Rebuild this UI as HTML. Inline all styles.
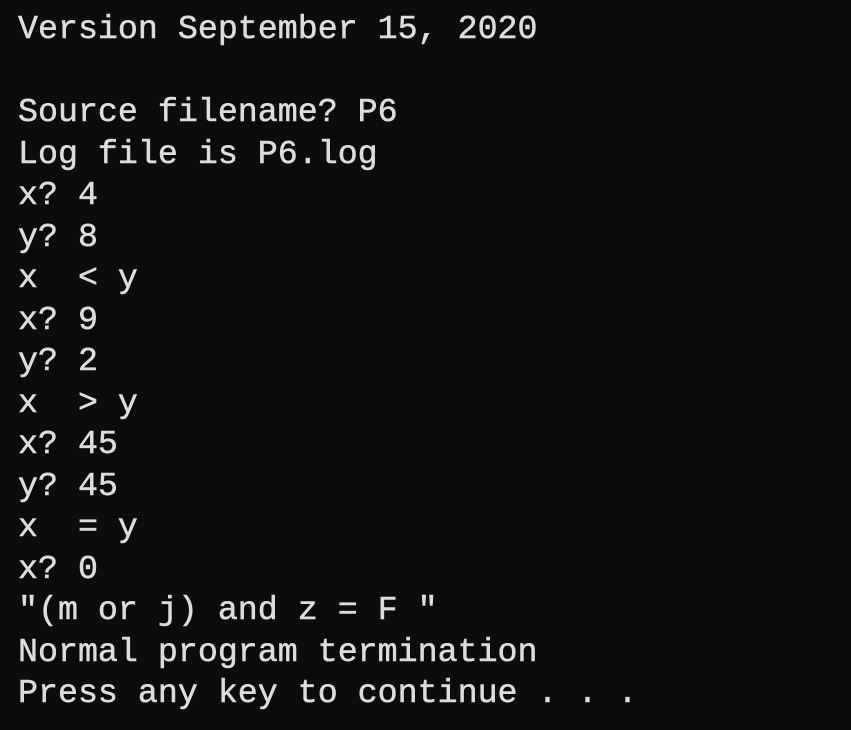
<!DOCTYPE html>
<html><head><meta charset="utf-8"><style>
html,body{margin:0;padding:0;background:#0c0c0c;width:851px;height:730px;overflow:hidden}
pre{margin:0;position:absolute;left:18px;top:9px;font-family:"Liberation Mono",monospace;font-size:33.3px;line-height:41.5px;color:#dddddd;-webkit-text-stroke:0.5px #dddddd}
</style></head><body><pre>Version September 15, 2020

Source filename? P6
Log file is P6.log
x? 4
y? 8
x  &lt; y
x? 9
y? 2
x  &gt; y
x? 45
y? 45
x  = y
x? 0
"(m or j) and z = F "
Normal program termination
Press any key to continue . . .</pre></body></html>
